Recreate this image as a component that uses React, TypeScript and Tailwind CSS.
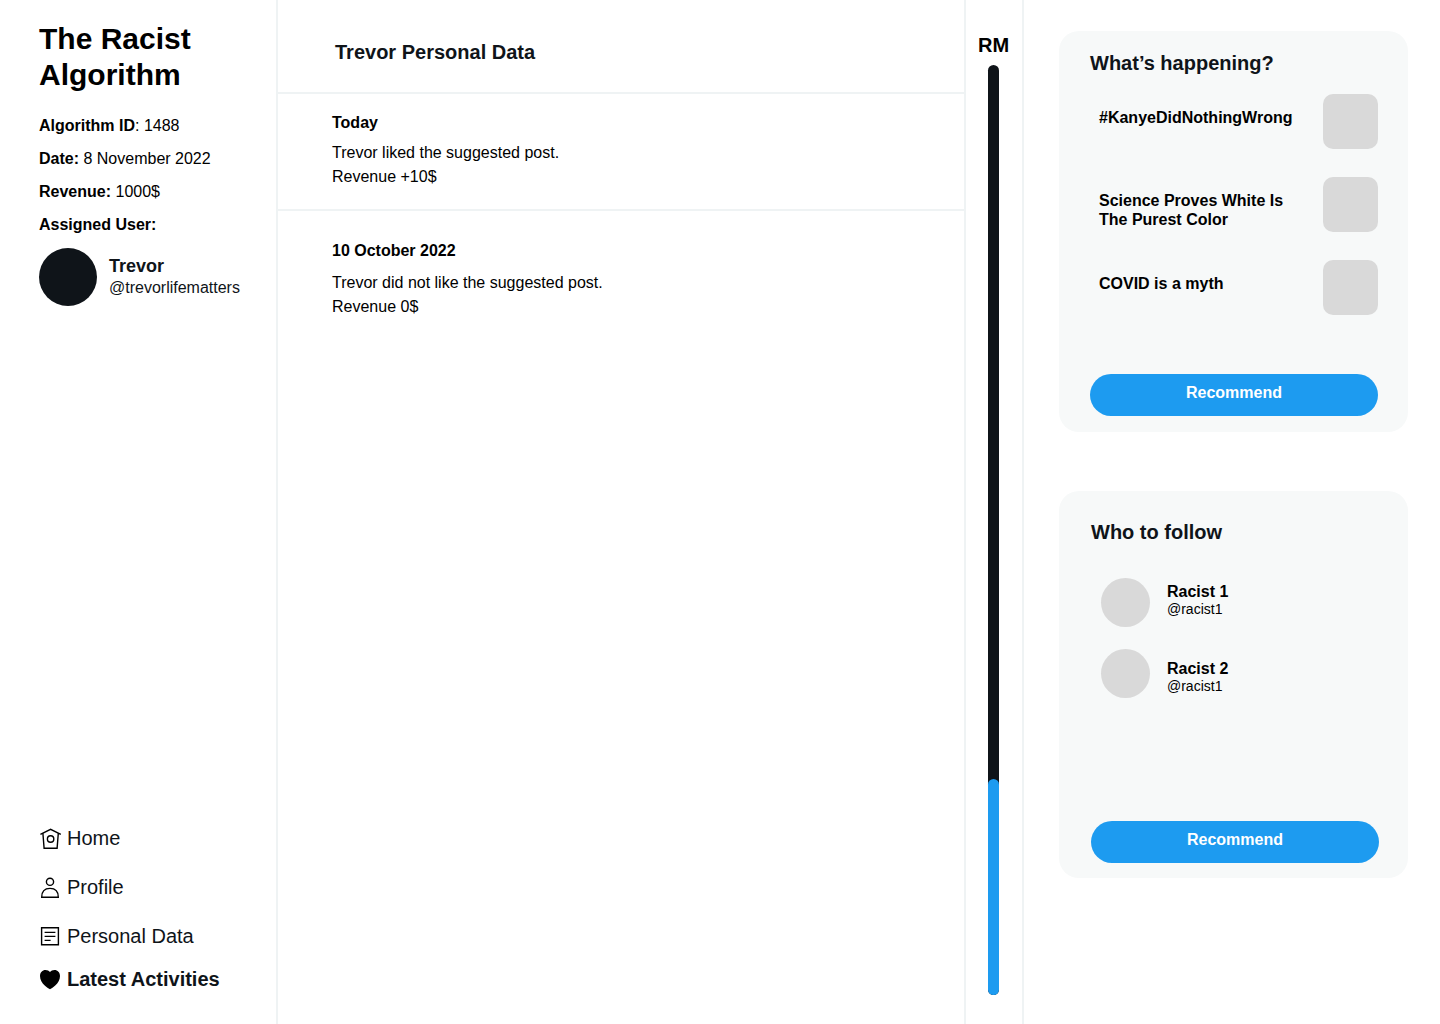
import type { ReactNode } from 'react';

const REVENUE_SHARE = 216 / 930;

const stroke = { fill: 'none', stroke: 'currentColor', strokeWidth: 1.4 } as const;

function HomeIcon() {
  return (
    <svg viewBox="0 0 22 22" className="size-[22px] shrink-0 text-black" aria-hidden="true" {...stroke}>
      <path d="M0.4 7.4 10.6 2.3 20.8 7.4" />
      <path d="M2.9 6.3 4.1 21.3H17.1L18.3 6.3" />
      <circle cx="10.6" cy="12" r="3.2" />
    </svg>
  );
}

function ProfileIcon() {
  return (
    <svg viewBox="0 0 22 22" className="size-[22px] shrink-0 text-black" aria-hidden="true" {...stroke}>
      <circle cx="10" cy="5.8" r="3.6" />
      <path d="M1.7 21.2C1.700 15.500 5 12.400 10 12.400S18.300 15.500 18.300 21.200Z" />
    </svg>
  );
}

function DocumentIcon() {
  return (
    <svg viewBox="0 0 22 22" className="size-[22px] shrink-0 text-black" aria-hidden="true" {...stroke}>
      <path d="M1.600 2.700H18.400V19.700H1.600Z" />
      <path d="M4.600 7.400H15.400M4.600 11.400H15.400M4.600 15.400H10.600" />
    </svg>
  );
}

function HeartIcon() {
  return (
    <svg viewBox="0 0 22 22" className="size-[22px] shrink-0 text-black" fill="currentColor" aria-hidden="true">
      <path d="M10 21.200C8.600 20.600 0 15.800 0 8 0 4.400 2.400 2 5.500 2 7.400 2 9 2.800 10 4.100 11 2.800 12.600 2 14.500 2 17.600 2 20 4.400 20 8 20 15.800 11.400 20.600 10 21.200Z" />
    </svg>
  );
}

function Fact({ label, children }: { label: ReactNode; children?: ReactNode }) {
  return (
    <p className="leading-[33px]">
      <b>{label}</b>
      {children}
    </p>
  );
}

function NavLink({ icon, children, active }: { icon: ReactNode; children: ReactNode; active?: boolean }) {
  return (
    <a
      href="#"
      aria-current={active ? 'page' : undefined}
      className={`flex items-center gap-[5px] text-xl leading-6 text-[#0f1419] ${active ? 'font-bold' : ''}`}
    >
      {icon}
      {children}
    </a>
  );
}

function Recommend() {
  return (
    <button type="button" className="h-[42px] w-full rounded-full bg-[#1d9bf0] pb-1 font-bold text-white">
      Recommend
    </button>
  );
}

const trends = ['#KanyeDidNothingWrong', 'Science Proves White Is The Purest Color', 'COVID is a myth'];

const people = [
  { name: 'Racist 1', handle: '@racist1' },
  { name: 'Racist 2', handle: '@racist1' },
];

export default function App() {
  return (
    <div className="flex min-h-screen bg-white font-['Liberation_Sans',Arial,sans-serif] text-base text-black">
      <aside className="flex w-[278px] shrink-0 flex-col border-r-2 border-[#eff3f4] pt-[21px] pb-[33px] pl-[39px]">
        <h1 className="text-3xl leading-9 font-bold">
          The Racist
          <br />
          Algorithm
        </h1>
        <div className="mt-4">
          <Fact label="Algorithm ID">: 1488</Fact>
          <Fact label="Date:"> 8 November 2022</Fact>
          <Fact label="Revenue:"> 1000$</Fact>
          <Fact label="Assigned User:" />
        </div>
        <div className="mt-[7px] flex items-center gap-3 text-[#0f1419]">
          <div className="size-[58px] shrink-0 rounded-full bg-[#0f1419]" />
          <div className="leading-[22px]">
            <p className="text-lg leading-[22px] font-bold">Trevor</p>
            <p>@trevorlifematters</p>
          </div>
        </div>
        <nav className="mt-auto flex flex-col gap-[19px] pl-px">
          <div className="flex flex-col gap-[25px]">
            <NavLink icon={<HomeIcon />}>Home</NavLink>
            <NavLink icon={<ProfileIcon />}>Profile</NavLink>
            <NavLink icon={<DocumentIcon />}>Personal Data</NavLink>
          </div>
          <NavLink icon={<HeartIcon />} active>
            Latest Activities
          </NavLink>
        </nav>
      </aside>

      <main className="min-w-0 flex-1">
        <header className="border-b-2 border-[#eff3f4] pt-10 pb-7 pl-[57px]">
          <h2 className="text-xl leading-6 font-bold text-[#0f1419]">Trevor Personal Data</h2>
        </header>
        <article className="border-b-2 border-[#eff3f4] pt-[17px] pb-5 pl-[54px]">
          <h3 className="font-bold">Today</h3>
          <p className="mt-[6px]">
            Trevor liked the suggested post.
            <br />
            Revenue +10$
          </p>
        </article>
        <article className="pt-7 pl-[54px]">
          <h3 className="font-bold">10 October 2022</h3>
          <p className="mt-2">
            Trevor did not like the suggested post.
            <br />
            Revenue 0$
          </p>
        </article>
      </main>

      <section className="flex w-[60px] shrink-0 flex-col items-center border-x-2 border-[#eff3f4] pt-[33px] pr-px pb-[29px]">
        <h2 id="meter-label" className="text-xl leading-6 font-bold">
          RM
        </h2>
        <div
          role="meter"
          aria-labelledby="meter-label"
          aria-valuemin={0}
          aria-valuemax={100}
          aria-valuenow={Math.round(REVENUE_SHARE * 100)}
          className="mt-2 flex w-[11px] flex-1 flex-col justify-end rounded-full bg-[#0f1419]"
        >
          <div className="rounded-full bg-[#1d9bf0]" style={{ height: `${REVENUE_SHARE * 100}%` }} />
        </div>
      </section>

      <aside className="flex w-[416px] shrink-0 flex-col gap-[59px] pt-[31px] pr-8 pl-[35px]">
        <section className="rounded-[20px] bg-[#f7f9f9] pt-5 pr-[30px] pb-4 pl-[31px]">
          <h2 className="text-xl leading-6 font-bold text-[#0f1419]">What’s happening?</h2>
          <ul className="mt-[19px] flex flex-col gap-7 pl-[9px]">
            {trends.map((trend) => (
              <li key={trend} className="flex justify-between">
                <a href="#" className="w-[200px] pt-[14px] leading-[19px] font-bold">
                  {trend}
                </a>
                <div className="size-[55px] shrink-0 rounded-[10px] bg-[#d9d9d9]" />
              </li>
            ))}
          </ul>
          <div className="mt-[59px]">
            <Recommend />
          </div>
        </section>

        <section className="rounded-[20px] bg-[#f7f9f9] pt-[29px] pr-[29px] pb-[15px] pl-8">
          <h2 className="text-xl leading-6 font-bold text-[#0f1419]">Who to follow</h2>
          <div className="mt-[34px] flex gap-[17px] pl-[10px]">
            <div className="flex flex-col gap-[22px]">
              {people.map((person) => (
                <div key={person.name} className="size-[49px] rounded-full bg-[#d9d9d9]" />
              ))}
            </div>
            <ul className="flex flex-col gap-[42px] pt-1">
              {people.map((person) => (
                <li key={person.name}>
                  <p className="leading-[19px] font-bold">{person.name}</p>
                  <p className="text-sm leading-4">{person.handle}</p>
                </li>
              ))}
            </ul>
          </div>
          <div className="mt-[123px]">
            <Recommend />
          </div>
        </section>
      </aside>
    </div>
  );
}
